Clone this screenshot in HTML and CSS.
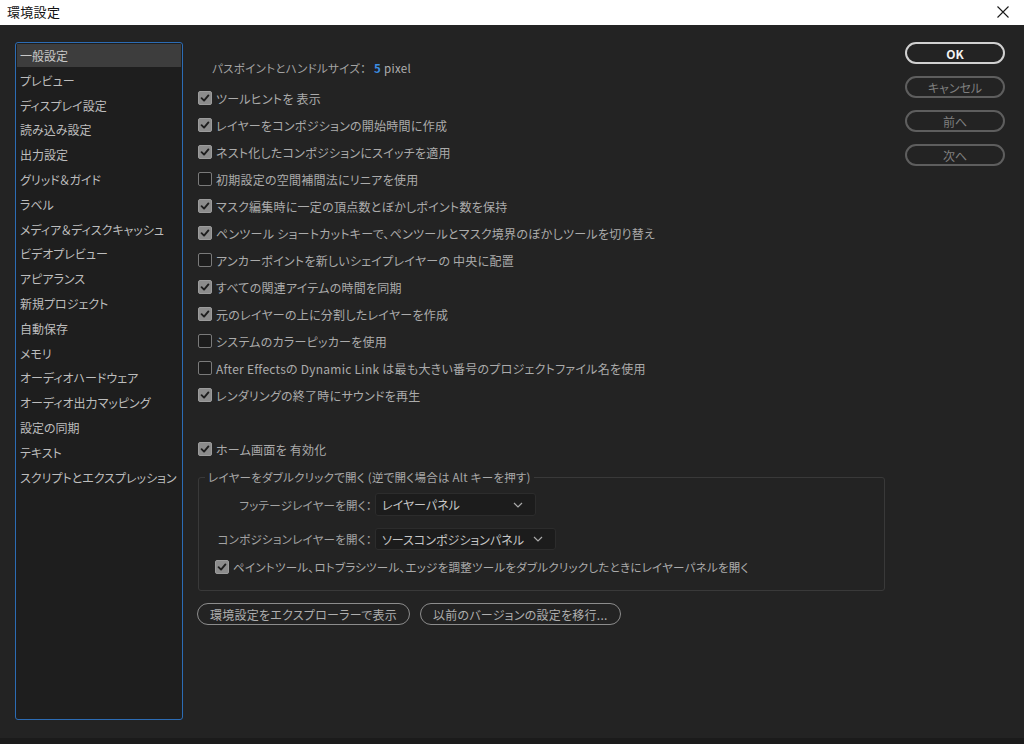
FILE: index.html
```html
<!DOCTYPE html>
<html lang="ja">
<head>
<meta charset="utf-8">
<title>環境設定</title>
<link rel="stylesheet" href="styles.css">
</head>
<body>
<div class="app">
  <header class="titlebar">
    <span class="title">環境設定</span>
    <span class="close"><svg width="14" height="14" viewBox="0 0 14 14"><path d="M1.5 1.5L12.5 12.5M12.5 1.5L1.5 12.5" stroke="#1a1a1a" stroke-width="1.1" fill="none"/></svg></span>
  </header>
  <div class="window">
    <nav class="sidebar">
      <div class="nav-item active">一般設定</div>
      <div class="nav-item">プレビュー</div>
      <div class="nav-item">ディスプレイ設定</div>
      <div class="nav-item">読み込み設定</div>
      <div class="nav-item">出力設定</div>
      <div class="nav-item">グリッド＆ガイド</div>
      <div class="nav-item">ラベル</div>
      <div class="nav-item">メディア＆ディスクキャッシュ</div>
      <div class="nav-item">ビデオプレビュー</div>
      <div class="nav-item">アピアランス</div>
      <div class="nav-item">新規プロジェクト</div>
      <div class="nav-item">自動保存</div>
      <div class="nav-item">メモリ</div>
      <div class="nav-item">オーディオハードウェア</div>
      <div class="nav-item">オーディオ出力マッピング</div>
      <div class="nav-item">設定の同期</div>
      <div class="nav-item">テキスト</div>
      <div class="nav-item">スクリプトとエクスプレッション</div>
    </nav>
    <main class="main">
      <div class="size-row">パスポイントとハンドルサイズ： <span class="num">5</span> <span class="unit">pixel</span></div>
      <div class="checks">
        <div class="check"><span class="box on"><svg viewBox="0 0 14 14"><path d="M3 7.2L5.9 10L11 4" /></svg></span>ツールヒントを 表示</div>
        <div class="check"><span class="box on"><svg viewBox="0 0 14 14"><path d="M3 7.2L5.9 10L11 4" /></svg></span>レイヤーをコンポジションの開始時間に作成</div>
        <div class="check"><span class="box on"><svg viewBox="0 0 14 14"><path d="M3 7.2L5.9 10L11 4" /></svg></span>ネスト化したコンポジションにスイッチを適用</div>
        <div class="check"><span class="box"></span>初期設定の空間補間法にリニアを使用</div>
        <div class="check"><span class="box on"><svg viewBox="0 0 14 14"><path d="M3 7.2L5.9 10L11 4" /></svg></span>マスク編集時に一定の頂点数とぼかしポイント数を保持</div>
        <div class="check"><span class="box on"><svg viewBox="0 0 14 14"><path d="M3 7.2L5.9 10L11 4" /></svg></span>ペンツール ショートカットキーで、ペンツールとマスク境界のぼかしツールを切り替え</div>
        <div class="check"><span class="box"></span>アンカーポイントを新しいシェイプレイヤーの 中央に配置</div>
        <div class="check"><span class="box on"><svg viewBox="0 0 14 14"><path d="M3 7.2L5.9 10L11 4" /></svg></span>すべての関連アイテムの時間を同期</div>
        <div class="check"><span class="box on"><svg viewBox="0 0 14 14"><path d="M3 7.2L5.9 10L11 4" /></svg></span>元のレイヤーの上に分割したレイヤーを作成</div>
        <div class="check"><span class="box"></span>システムのカラーピッカーを使用</div>
        <div class="check"><span class="box"></span>After Effectsの Dynamic Link は最も大きい番号のプロジェクトファイル名を使用</div>
        <div class="check"><span class="box on"><svg viewBox="0 0 14 14"><path d="M3 7.2L5.9 10L11 4" /></svg></span>レンダリングの終了時にサウンドを再生</div>
        <div class="check spacer"></div>
        <div class="check"><span class="box on"><svg viewBox="0 0 14 14"><path d="M3 7.2L5.9 10L11 4" /></svg></span>ホーム画面を 有効化</div>
      </div>
      <fieldset class="group">
        <legend>レイヤーをダブルクリックで開く (逆で開く場合は Alt キーを押す)</legend>
        <div class="field-grid">
          <span class="field-label">フッテージレイヤーを開く：</span>
          <div class="select w1"><span>レイヤーパネル</span><svg width="10" height="6" viewBox="0 0 10 6"><path d="M1 1L5 5L9 1"/></svg></div>
          <span class="field-label">コンポジションレイヤーを開く：</span>
          <div class="select w2"><span>ソースコンポジションパネル</span><svg width="10" height="6" viewBox="0 0 10 6"><path d="M1 1L5 5L9 1"/></svg></div>
        </div>
        <div class="check inner"><span class="box on"><svg viewBox="0 0 14 14"><path d="M3 7.2L5.9 10L11 4" /></svg></span>ペイントツール、ロトブラシツール、エッジを調整ツールをダブルクリックしたときにレイヤーパネルを開く</div>
      </fieldset>
      <div class="bottom-buttons">
        <button class="pill">環境設定をエクスプローラーで表示</button>
        <button class="pill">以前のバージョンの設定を移行...</button>
      </div>
    </main>
    <aside class="actions">
      <button class="act primary">OK</button>
      <button class="act">キャンセル</button>
      <button class="act">前へ</button>
      <button class="act">次へ</button>
    </aside>
  </div>
  <footer class="statusbar"></footer>
</div>
</body>
</html>
```

FILE: styles.css
```css
* { box-sizing: border-box; }
html, body { margin: 0; padding: 0; }
body {
  width: 1024px;
  height: 744px;
  overflow: hidden;
  background: #232323;
  font-family: "Noto Sans CJK JP", "Noto Sans", sans-serif;
  font-feature-settings: "palt";
}
.app { display: flex; flex-direction: column; height: 744px; }

.titlebar {
  height: 25px;
  background: #ffffff;
  display: flex;
  align-items: center;
  justify-content: space-between;
  padding: 0 14px 2px 7px;
}
.title { font-size: 13px; color: #111; letter-spacing: 0.3px; }
.close { display: flex; margin-top: 1px; }

.window {
  height: 713px;
  display: flex;
  padding: 17px 19px 0 15px;
  background: #232323;
}

.sidebar {
  width: 168px;
  height: 678px;
  border: 1px solid #2c6cb4;
  border-radius: 3px;
  background: #1e1e1e;
  padding: 1px;
  flex-shrink: 0;
}
.nav-item {
  height: 23px;
  margin-bottom: 1.8px;
  line-height: 23px;
  padding-left: 3px;
  font-size: 12px;
  color: #bdbdbd;
  white-space: nowrap;
}
.nav-item.active { background: #3d3d3d; color: #c8c8c8; }

.main { flex: 1; padding-left: 15px; }

.size-row {
  margin-top: 18px;
  height: 16px;
  line-height: 16px;
  padding-left: 14px;
  font-size: 11.5px;
  letter-spacing: 0.3px;
  color: #a3a3a3;
}
.size-row .num { color: #3c8ee3; font-weight: bold; margin-left: 5px; }
.size-row .unit { color: #b0b0b0; }

.checks { margin-top: 8.5px; }
.check {
  height: 27px;
  display: flex;
  align-items: center;
  font-size: 12px;
  letter-spacing: 0.25px;
  color: #ababab;
  white-space: nowrap;
}
.box {
  width: 14px;
  height: 14px;
  border: 1px solid #7a7a7a;
  border-radius: 2px;
  background: #1c1c1c;
  margin-right: 4px;
  flex-shrink: 0;
  display: flex;
}
.box.on { background: #8c8c8c; border-color: #9c9c9c; }
.box svg { width: 12px; height: 12px; }
.box path { fill: none; stroke: #1e1e1e; stroke-width: 2.2; stroke-linecap: round; stroke-linejoin: round; }

.group {
  margin: 6.5px 0 0 0;
  width: 687px;
  border: 1px solid #393939;
  border-radius: 3px;
  padding: 0 0 14px 0;
}
.group legend {
  margin-left: 6px;
  padding: 0 3px;
  height: 16px;
  line-height: 16px;
  font-size: 11.5px;
  letter-spacing: 0.25px;
  color: #a8a8a8;
}
.field-grid {
  margin-top: 8px;
  display: grid;
  grid-template-columns: 173px auto;
  column-gap: 3px;
  row-gap: 12px;
  align-items: center;
  justify-items: start;
}
.field-label {
  justify-self: end;
  font-size: 11.5px;
  letter-spacing: 0.25px;
  color: #a3a3a3;
}
.select {
  height: 23px;
  background: #1c1c1c;
  border: 1px solid #2c2c2c;
  border-radius: 3px;
  display: flex;
  align-items: center;
  justify-content: space-between;
  padding: 0 12px 0 6px;
  font-size: 12px;
  color: #c6c6c6;
}
.select.w1 { width: 161px; }
.select.w2 { width: 181px; height: 22px; }
.select path { fill: none; stroke: #aaaaaa; stroke-width: 1.2; }

.check.inner { height: 18px; margin-top: 8px; padding-left: 16px; font-size: 11.5px; }

.bottom-buttons { margin: 12px 0 0 -1px; display: flex; gap: 10px; }
.pill {
  height: 22px;
  border: 1.5px solid #8c8c8c;
  border-radius: 11px;
  background: transparent;
  padding: 0 12px;
  font-family: inherit;
  font-feature-settings: "palt";
  font-size: 12px;
  letter-spacing: 0.25px;
  color: #aeaeae;
}

.actions {
  width: 100px;
  display: flex;
  flex-direction: column;
  gap: 12px;
  flex-shrink: 0;
}
.act {
  height: 22px;
  border: 2px solid #5e5e5e;
  border-radius: 11px;
  background: transparent;
  font-family: inherit;
  font-feature-settings: "palt";
  font-size: 12px;
  color: #7f7f7f;
  padding: 0;
}
.act.primary { border-color: #d0d0d0; color: #f2f2f2; font-weight: bold; }

.statusbar { height: 6px; background: #1b1b1b; }
```
